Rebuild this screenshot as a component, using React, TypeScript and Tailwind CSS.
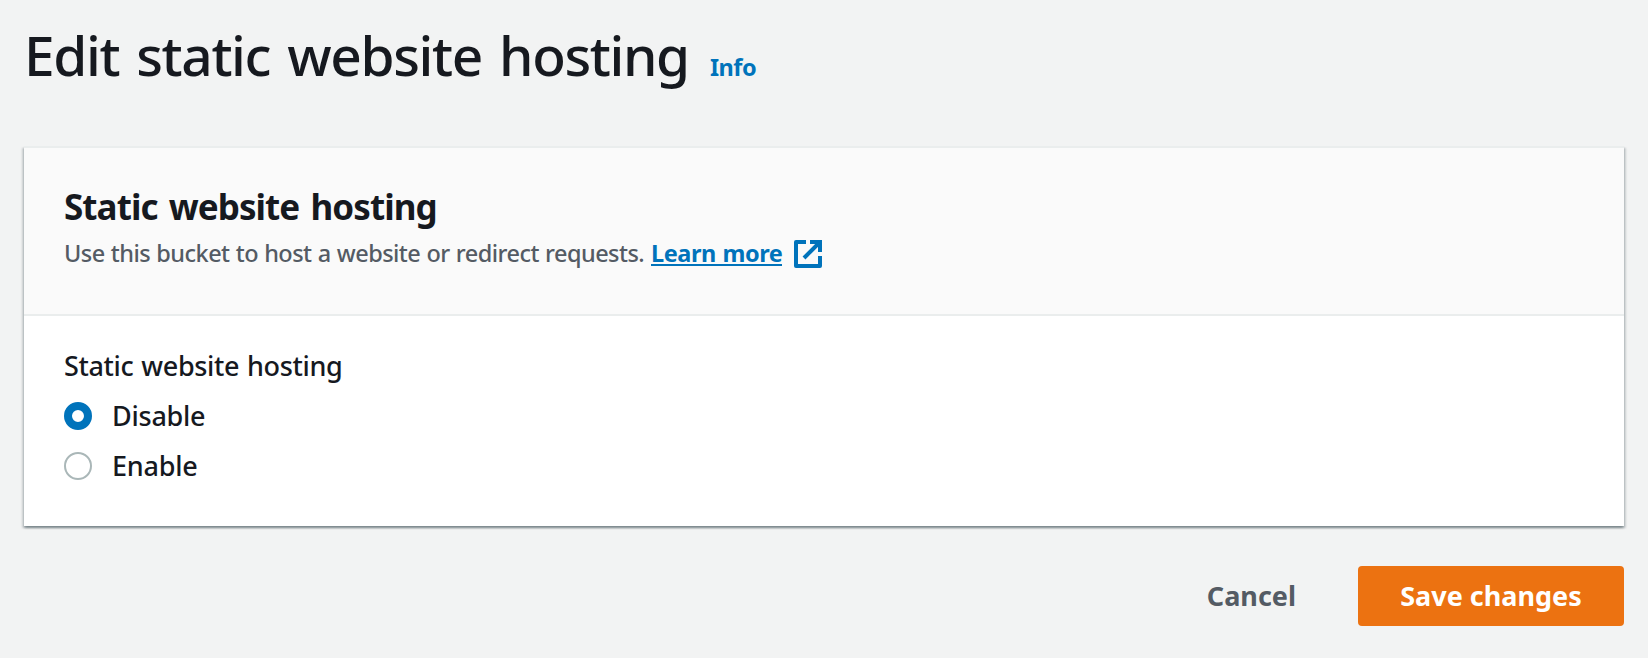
import { useState } from "react";

function ExternalIcon() {
  return (
    <svg className="mt-[5px] ml-[12px] h-[28px] w-[28px] shrink-0" viewBox="0 0 28 28" fill="none" stroke="#0073bb" strokeWidth="4">
      <path d="M12 2H2V26H26V16" strokeLinejoin="round" />
      <path d="M16 2H26V12" />
      <path d="M26 2L10 18" />
    </svg>
  );
}

function Radio({ label, checked, onSelect }: { label: string; checked: boolean; onSelect: () => void }) {
  return (
    <button type="button" role="radio" aria-checked={checked} onClick={onSelect} className="flex h-[40px] items-start">
      {checked ? (
        <span className="mt-[7px] h-[28px] w-[28px] rounded-full border-8 border-[#0073bb] bg-white" />
      ) : (
        <span className="mt-[7px] h-[28px] w-[28px] rounded-full border-2 border-[#aab7b8] bg-white" />
      )}
      <span className="ml-[20px] text-[27px] leading-[42px] font-medium tracking-[-0.25px]">{label}</span>
    </button>
  );
}

export default function App() {
  const [enabled, setEnabled] = useState(false);
  return (
    <main className="h-[658px] w-full overflow-hidden bg-[#f2f3f3] px-[24px] pt-[19px] font-['Noto_Sans',sans-serif] text-[#16191f]">
      <div className="flex h-[72px] items-baseline">
        <h1 className="text-[55px] leading-[72px] font-medium tracking-[-1.35px] [word-spacing:4px] whitespace-nowrap">Edit static website hosting</h1>
        <a href="#info" className="ml-[21px] text-[23.5px] font-bold tracking-[-0.5px] text-[#0073bb]">Info</a>
      </div>

      <section className="mt-[55px] h-[380px] bg-white shadow-[0_2px_2px_0_rgba(0,28,36,0.3),2px_2px_2px_0_rgba(0,28,36,0.15),-2px_2px_2px_0_rgba(0,28,36,0.15)]">
        <header className="h-[170px] border-y-2 border-[#eaeded] bg-[#fafafa] px-[40px] pt-[37px]">
          <h2 className="text-[35px] leading-[44px] font-bold tracking-[-0.93px] [word-spacing:3px]">Static website hosting</h2>
          <div className="mt-[6px] flex h-[36px] text-[23.5px] leading-[36px]">
            <p className="w-[587px] font-medium tracking-[-0.54px] [word-spacing:0.6px] whitespace-nowrap text-[#545b64]">Use this bucket to host a website or redirect requests.</p>
            <a href="#learn" className="flex font-bold text-[#0073bb]">
              <span className="h-[31px] w-[131px] border-b-2 border-[#0073bb] tracking-[-0.45px] [word-spacing:1px] whitespace-nowrap">Learn more</span>
              <ExternalIcon />
            </a>
          </div>
        </header>
        <div className="px-[40px] pt-[29px]">
          <p className="h-[40px] text-[27px] leading-[42px] font-medium tracking-[-0.35px] [word-spacing:1.2px]">Static website hosting</p>
          <div role="radiogroup" className="mt-[10px] flex flex-col gap-[10px]">
            <Radio label="Disable" checked={!enabled} onSelect={() => setEnabled(false)} />
            <Radio label="Enable" checked={enabled} onSelect={() => setEnabled(true)} />
          </div>
        </div>
      </section>

      <footer className="mt-[40px] flex justify-end gap-[20px] text-[27px] leading-[60px] font-bold">
        <button type="button" className="h-[60px] px-[42px] text-[#545b64]">Cancel</button>
        <button type="button" className="h-[60px] w-[266px] rounded-[4px] bg-[#ec7211] text-white">Save changes</button>
      </footer>
    </main>
  );
}
